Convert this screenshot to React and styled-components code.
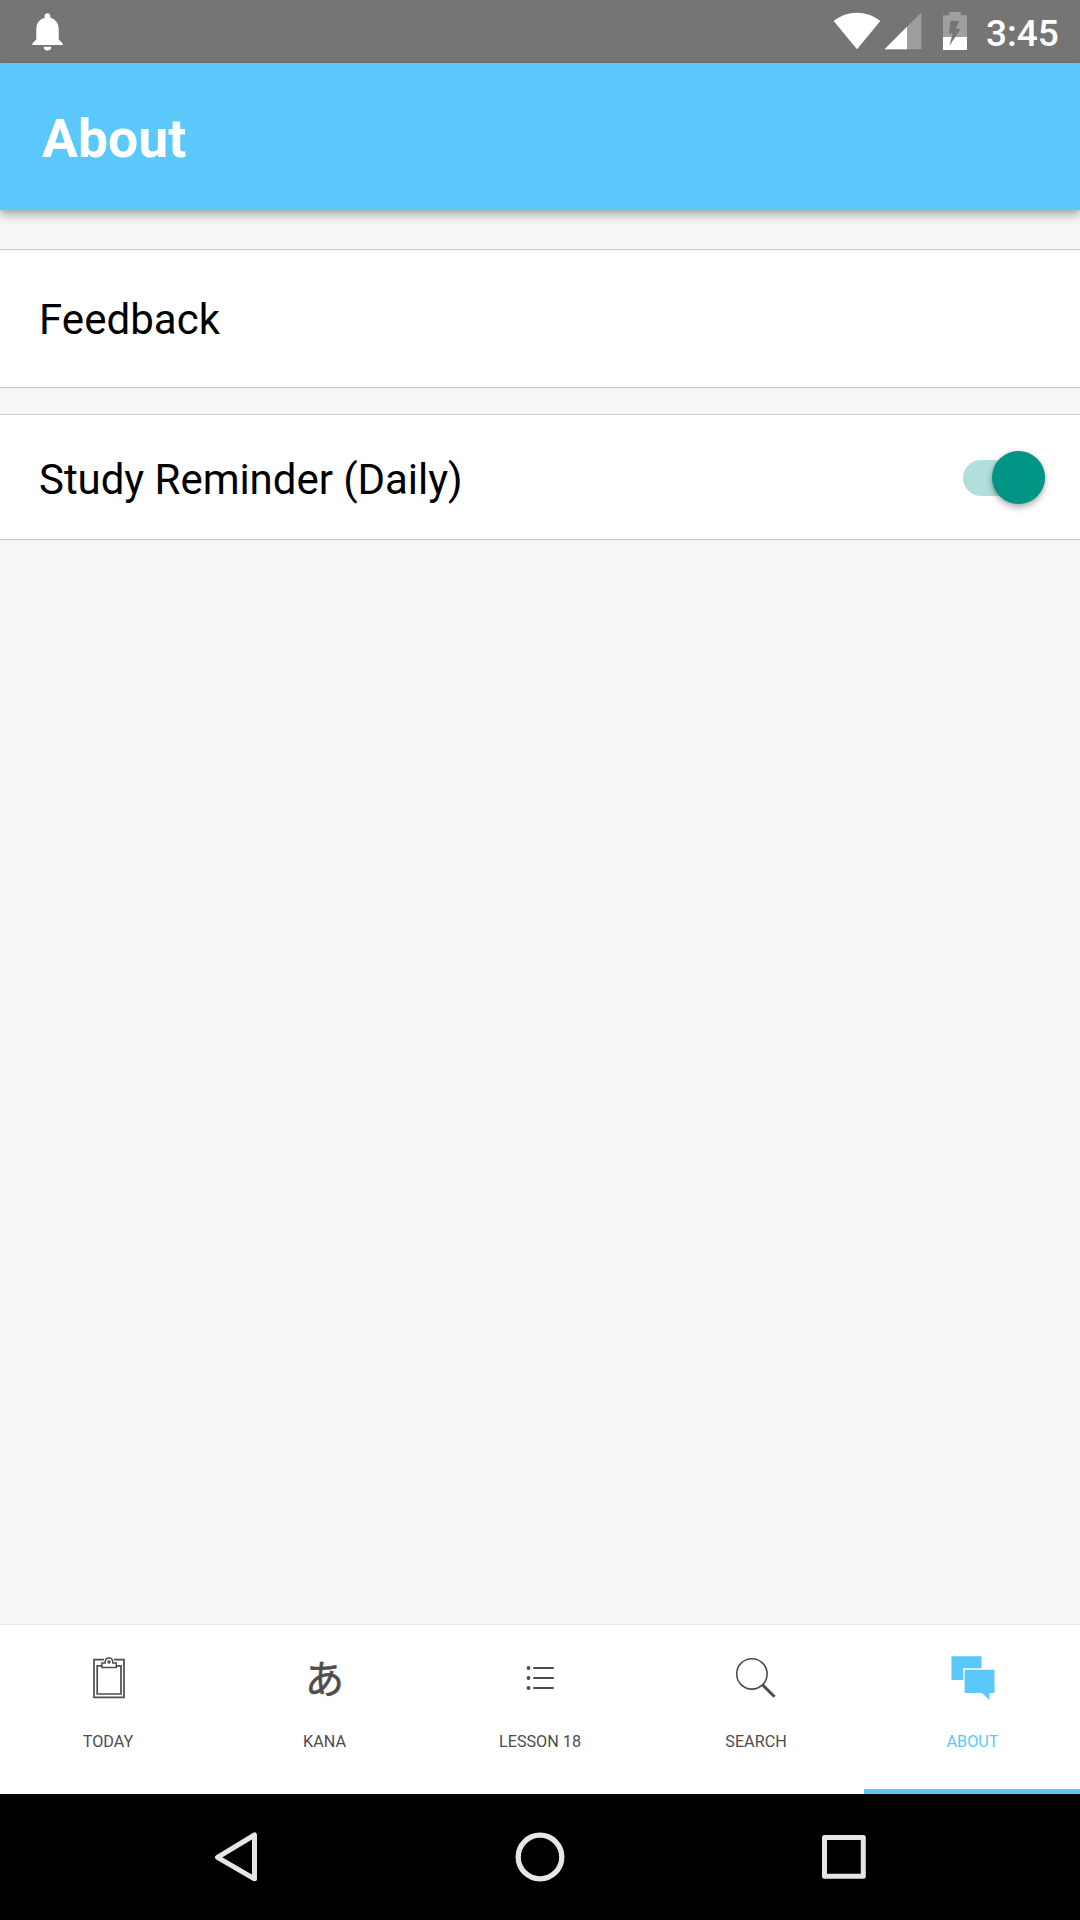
import React, { useState } from 'react';
import styled, { createGlobalStyle, css } from 'styled-components';

const sky = '#5ac8fb';
const ink = '#4d4d4d';

const GlobalStyle = createGlobalStyle`
  * { box-sizing: border-box; }
  body { margin: 0; background: #f7f7f7; }
`;

const Screen = styled.div`
  display: flex;
  flex-direction: column;
  width: 1080px;
  height: 1920px;
  overflow: hidden;
  background: #f7f7f7;
  font-family: Roboto, "Noto Sans CJK JP", sans-serif;
`;

const StatusBar = styled.div`
  flex: none;
  display: flex;
  justify-content: space-between;
  height: 63px;
  padding: 0 21px 0 28px;
  background: #757575;
  color: #fff;
`;

const StatusGroup = styled.div`
  display: flex;
`;

const Glyph = styled.svg`
  display: block;
  flex: none;
`;

const Clock = styled.span`
  width: 73px;
  font-size: 37px;
  font-weight: 500;
  line-height: 67px;
  white-space: nowrap;
`;

const Header = styled.header`
  flex: none;
  z-index: 1;
  display: flex;
  align-items: center;
  height: 147px;
  padding: 5px 42px 0;
  background: ${sky};
  box-shadow: 0 5px 10px rgba(0, 0, 0, 0.3), 0 1px 4px rgba(0, 0, 0, 0.1);
`;

const Title = styled.h1`
  margin: 0;
  color: #fff;
  font-size: 53.5px;
  font-weight: 700;
  line-height: 62px;
`;

const Settings = styled.main`
  flex: 1;
  display: flex;
  flex-direction: column;
  gap: 26px;
  padding-top: 39px;
`;

const Row = styled.div`
  display: flex;
  align-items: center;
  justify-content: space-between;
  height: ${(p) => p.$height}px;
  padding: 0 35px 0 39px;
  background: #fff;
  border: solid #c8c7cc;
  border-width: 1px 0;
`;

const RowLabel = styled.span`
  padding-top: ${(p) => p.$drop || 0}px;
  color: #000;
  font-size: 42px;
  line-height: 50px;
  letter-spacing: ${(p) => p.$tracking || 0}px;
`;

const Track = styled.button`
  display: flex;
  align-items: center;
  justify-content: ${(p) => (p.$on ? 'flex-end' : 'flex-start')};
  width: 82.5px;
  height: 36px;
  margin: 1px 0 0;
  padding: 0;
  border: 0;
  border-radius: 18px;
  background: ${(p) => (p.$on ? '#b2dfdb' : '#b9b9b9')};
`;

const Thumb = styled.span`
  flex: none;
  width: 53px;
  height: 53px;
  margin-bottom: 1px;
  border-radius: 50%;
  background: ${(p) => (p.$on ? '#009485' : '#f1f1f1')};
  box-shadow: 0 4px 6px rgba(0, 0, 0, 0.26), 0 0 4px rgba(0, 0, 0, 0.14);
`;

const TabBar = styled.nav`
  flex: none;
  display: flex;
  height: 170px;
  background: #fff;
  border-top: 1px solid #ebebeb;
  box-shadow: 0 -1px 1px rgba(0, 0, 0, 0.02);
`;

const Tab = styled.div`
  flex: 1;
  display: flex;
  flex-direction: column;
  align-items: center;
  padding-top: 25px;
  color: ${ink};
  border-bottom: 5px solid transparent;
  ${(p) =>
    p.$active &&
    css`
      color: ${sky};
      border-bottom-color: ${sky};
    `}
`;

const TabIcon = styled.div`
  display: flex;
  align-items: center;
  justify-content: center;
  height: 56px;
  padding-left: ${(p) => p.$nudge || 0}px;
`;

const Kana = styled.span`
  font-family: "Noto Sans CJK JP", sans-serif;
  font-size: 39px;
  font-weight: 400;
  line-height: 52px;
  padding-bottom: 4px;
  -webkit-text-stroke: 0.6px currentColor;
`;

const TabLabel = styled.span`
  margin-top: 26px;
  padding-left: ${(p) => p.$nudge || 0}px;
  font-size: 16.2px;
  line-height: 20px;
  white-space: nowrap;
`;

const NavBar = styled.div`
  flex: none;
  display: flex;
  align-items: center;
  justify-content: space-between;
  height: 126px;
  padding: 0 200px;
  background: #000;
`;

const Bell = () => (
  <Glyph width="40" height="63" viewBox="28 0 40 63" fill="#fff">
    <path d="M47.5 13.3c-1.7 0-2.9 1.3-2.9 2.9v1.6C39.600 19.200 36.300 23.500 36.300 29V39.500L32.300 43.400V45H62.700V43.400L58.700 39.500V29C58.700 23.500 55.400 19.200 50.400 17.800V16.200C50.400 14.600 49.200 13.300 47.500 13.300Z" />
    <path d="M43.700 46.700H51.300A3.800 3.800 0 0 1 43.700 46.700Z" />
  </Glyph>
);

const Wifi = () => (
  <Glyph width="48" height="63" viewBox="833 0 48 63" fill="#fff">
    <path d="M857 49.200L833.700 21C840.500 15.500 848.400 12.700 857 12.700S873.500 15.500 880.300 21Z" />
  </Glyph>
);

const Signal = () => (
  <Glyph width="54" height="63" viewBox="881 0 54 63" fill="#fff">
    <path d="M884.600 49.200L921.300 12.500V49.200Z" fillOpacity=".3" />
    <path d="M884.600 49.200L907 26.800V49.200Z" />
  </Glyph>
);

const Battery = () => (
  <Glyph width="51" height="63" viewBox="935 0 51 63">
    <path d="M943 15.300H949.300V12H960.800V15.300H967V50H943Z" fill="#9f9f9f" />
    <path d="M943 37H967V50H943Z" fill="#fff" />
    <path d="M950.300 21H959.300L955.500 28.800H960.700L949.300 46L952.700 33.500H949Z" fill="#757575" />
  </Glyph>
);

const Clipboard = () => (
  <Glyph width="32" height="42" viewBox="0 0 32 42" fill="none" stroke="currentColor">
    <path d="M11 2.600H1V40.400H31V2.600H21" strokeWidth="1.700" />
    <path d="M9 8.800H4.200V37H28V8.800H23" strokeWidth="1.700" />
    <path d="M8.900 10.600V5.900H12.100C12.100 3 13.500 1 16 1S19.900 3 19.900 5.900H23.300V10.600Z" strokeWidth="1.500" />
    <circle cx="16" cy="5" r="1.700" fill="currentColor" stroke="none" />
  </Glyph>
);

const ListIcon = () => (
  <Glyph width="28" height="26" viewBox="0 0 28 26" fill="currentColor">
    {[3, 13, 23].map((y) => (
      <g key={y}>
        <circle cx="2.500" cy={y} r="1.900" />
        <rect x="7.300" y={y - 1} width="20.500" height="2" />
      </g>
    ))}
  </Glyph>
);

const SearchIcon = () => (
  <Glyph width="40" height="42" viewBox="0 0 40 42" fill="none" stroke="currentColor">
    <circle cx="15.900" cy="16.900" r="15.200" strokeWidth="1.600" />
    <path d="M26.500 27.800L38.600 39.700" strokeWidth="3" />
  </Glyph>
);

const ChatIcon = () => (
  <Glyph width="44" height="44" viewBox="0 0 44 44" fill="currentColor">
    <path d="M.5 .2H30.500V12.300H12.200V24H.5Z" />
    <path d="M13.600 13.800H43.500V37H38.500V44L31 37H13.600Z" />
  </Glyph>
);

const BackIcon = () => (
  <Glyph width="70" height="60" viewBox="200 1827 70 60" fill="none" stroke="#e6e6e6" strokeWidth="5" strokeLinejoin="round">
    <path d="M217.500 1857.300L254.500 1835V1878.800Z" />
  </Glyph>
);

const HomeIcon = () => (
  <Glyph width="60" height="60" viewBox="0 0 60 60" fill="none" stroke="#e6e6e6" strokeWidth="5.300">
    <circle cx="30" cy="30" r="21.800" />
  </Glyph>
);

const RecentsIcon = () => (
  <Glyph width="70" height="60" viewBox="810 1827 70 60" fill="none" stroke="#e6e6e6" strokeWidth="5" strokeLinejoin="round">
    <rect x="824.500" y="1837.500" width="38.800" height="38.800" />
  </Glyph>
);

const tabs = [
  { label: 'TODAY', icon: <Clipboard />, iconNudge: 1 },
  { label: 'KANA', icon: <Kana>あ</Kana>, iconNudge: 1, labelNudge: 1 },
  { label: 'LESSON 18', icon: <ListIcon /> },
  { label: 'SEARCH', icon: <SearchIcon /> },
  { label: 'ABOUT', icon: <ChatIcon />, iconNudge: 1, labelNudge: 1, active: true },
];

export default function App() {
  const [reminder, setReminder] = useState(true);
  return (
    <Screen>
      <GlobalStyle />
      <StatusBar>
        <Bell />
        <StatusGroup>
          <Wifi />
          <Signal />
          <Battery />
          <Clock>3:45</Clock>
        </StatusGroup>
      </StatusBar>
      <Header>
        <Title>About</Title>
      </Header>
      <Settings>
        <Row $height={139}>
          <RowLabel $drop={3} $tracking={0.05}>Feedback</RowLabel>
        </Row>
        <Row $height={126}>
          <RowLabel $drop={6} $tracking={-0.04}>Study Reminder (Daily)</RowLabel>
          <Track
            type="button"
            role="switch"
            aria-checked={reminder}
            $on={reminder}
            onClick={() => setReminder(!reminder)}
          >
            <Thumb $on={reminder} />
          </Track>
        </Row>
      </Settings>
      <TabBar>
        {tabs.map((t) => (
          <Tab key={t.label} $active={t.active}>
            <TabIcon $nudge={t.iconNudge}>{t.icon}</TabIcon>
            <TabLabel $nudge={t.labelNudge}>{t.label}</TabLabel>
          </Tab>
        ))}
      </TabBar>
      <NavBar>
        <BackIcon />
        <HomeIcon />
        <RecentsIcon />
      </NavBar>
    </Screen>
  );
}
